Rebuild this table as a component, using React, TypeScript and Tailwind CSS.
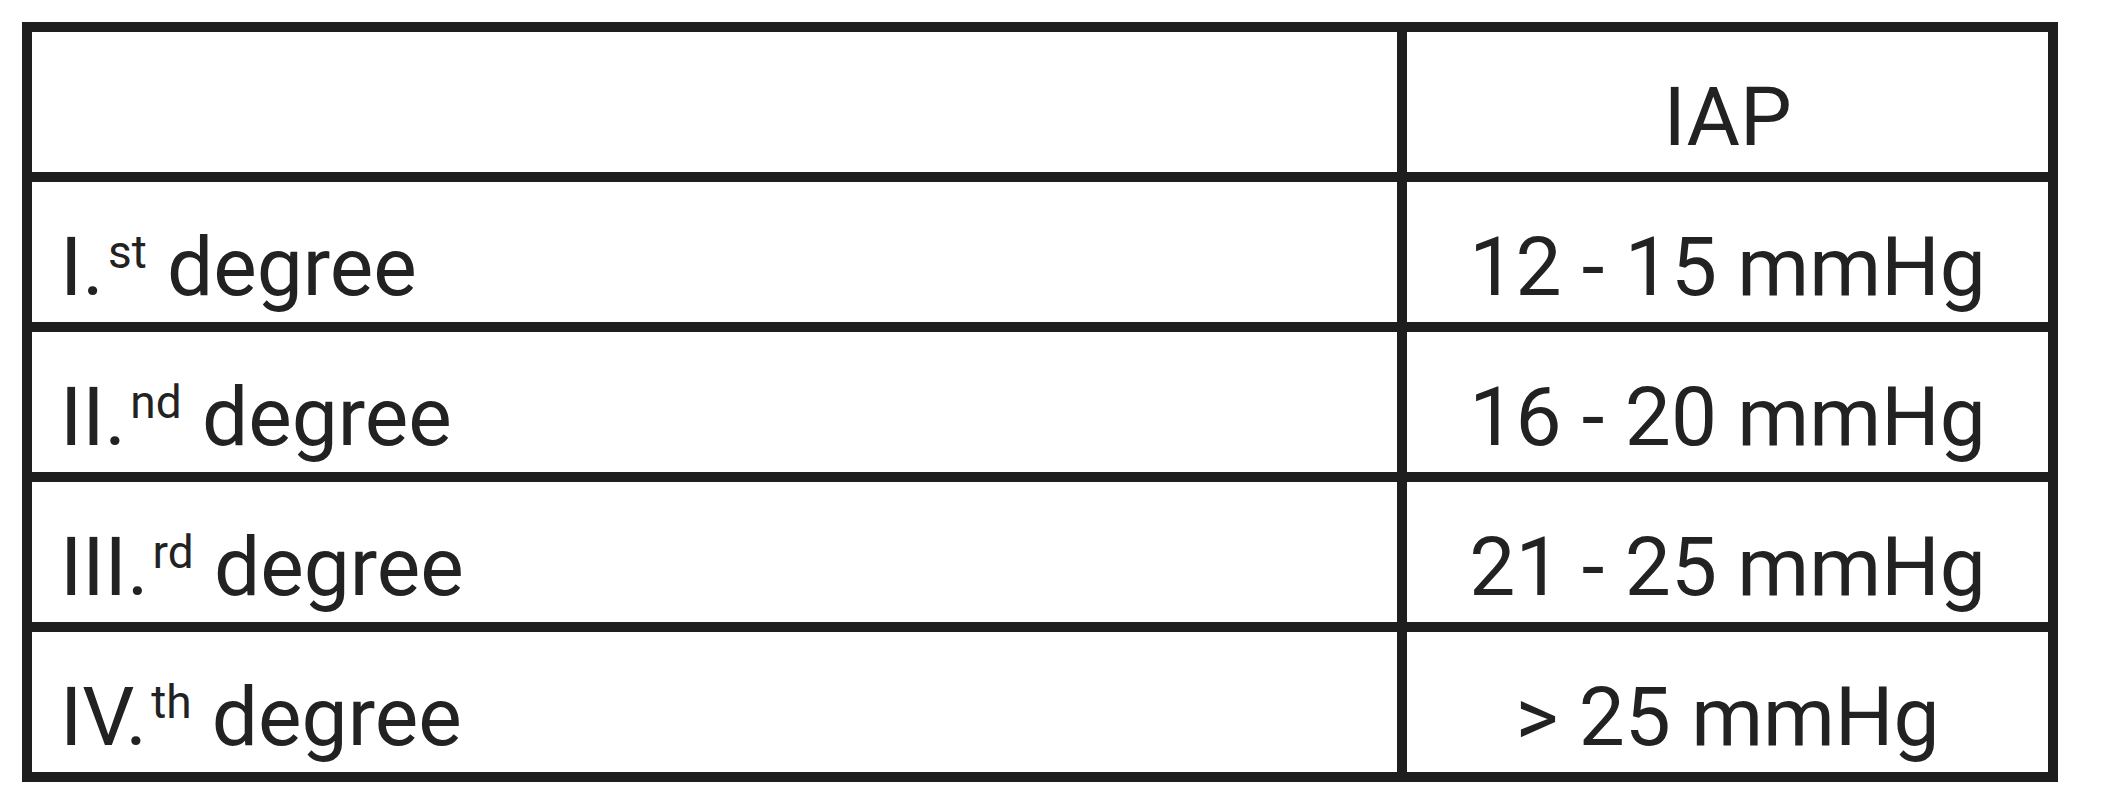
import React from "react";

const rows: { roman: string; sup: string; value: string }[] = [
  { roman: "I.", sup: "st", value: "12 - 15 mmHg" },
  { roman: "II.", sup: "nd", value: "16 - 20 mmHg" },
  { roman: "III.", sup: "rd", value: "21 - 25 mmHg" },
  { roman: "IV.", sup: "th", value: "> 25 mmHg" },
];

export default function App() {
  return (
    <div className="w-[2123px] h-[800px] bg-white pt-[22px] pl-[22px]" style={{ fontFamily: "Roboto, 'Noto Sans', sans-serif" }}>
      <div className="w-[2036px] bg-[#1e1e1e] p-[10px] grid grid-cols-[1365px_641px] gap-[10px] text-[#222222]">
        <div className="bg-white h-[140px]" />
        <div className="bg-white h-[140px] flex items-end justify-center pb-[7px] text-[82px] leading-[96px]">IAP</div>
        {rows.map((r) => (
          <React.Fragment key={r.roman}>
            <div className="bg-white h-[140px] flex items-end pl-[28px] pb-[7px] text-[82px] leading-[96px] whitespace-pre">
              <span>
                {r.roman}
                <span className="text-[46px] leading-none align-[27px] ml-[4px]">{r.sup}</span>
                {" degree"}
              </span>
            </div>
            <div className="bg-white h-[140px] flex items-end justify-center pb-[7px] text-[82px] leading-[96px]">
              {r.value}
            </div>
          </React.Fragment>
        ))}
      </div>
    </div>
  );
}
